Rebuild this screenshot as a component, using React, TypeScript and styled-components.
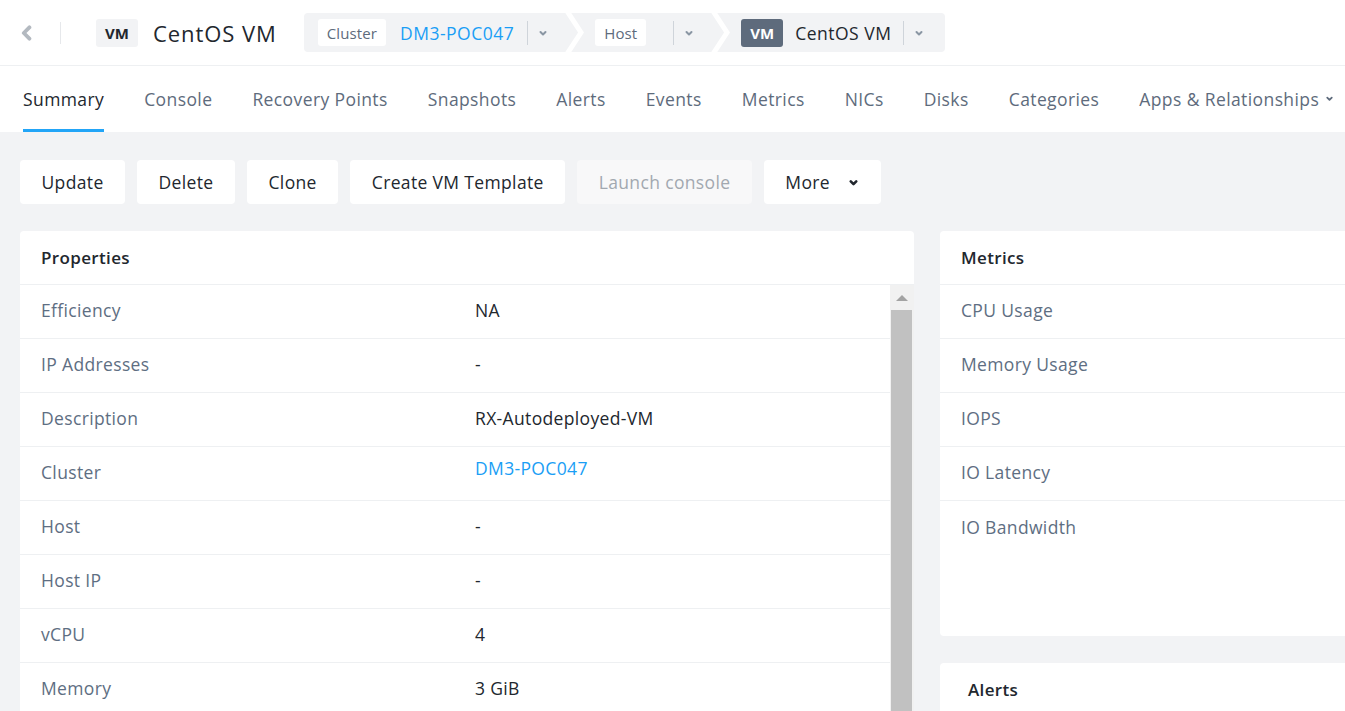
import React from "react";
import styled, { createGlobalStyle } from "styled-components";

const GlobalStyle = createGlobalStyle`
  html, body {
    margin: 0;
    padding: 0;
    background: #f2f3f5;
    font-family: "Open Sans", "Liberation Sans", sans-serif;
    letter-spacing: 0.35px;
    overflow: hidden;
  }
  * { box-sizing: border-box; }
`;

const Page = styled.div`
  width: 1345px;
  height: 711px;
  overflow: hidden;
  background: #f2f3f5;
`;

const TopBar = styled.header`
  height: 66px;
  background: #fff;
  border-bottom: 1px solid #eef0f2;
  display: flex;
  align-items: center;
  padding-left: 18px;
`;

const BackButton = styled.div`
  width: 18px;
  display: flex;
  align-items: center;
  justify-content: center;
  color: #b3b9c0;
`;

const VDivider = styled.div<{ $h?: number; $color?: string }>`
  width: 1px;
  height: ${(p) => p.$h ?? 22}px;
  background: ${(p) => p.$color ?? "#e6e8eb"};
`;

const TypeBadge = styled.div<{ $dark?: boolean }>`
  height: 28px;
  padding: 0 9px;
  border-radius: 3px;
  display: flex;
  align-items: center;
  font-size: 15px;
  font-weight: 700;
  letter-spacing: 0;
  background: ${(p) => (p.$dark ? "#5e6b7c" : "#f2f3f5")};
  color: ${(p) => (p.$dark ? "#fff" : "#22272e")};
`;

const PageTitle = styled.h1`
  margin: 0 27px 0 15px;
  font-size: 22px;
  font-weight: 400;
  letter-spacing: 0.95px;
  color: #22272e;
  white-space: nowrap;
`;

const Crumbs = styled.nav`
  height: 39px;
  background: #f2f3f5;
  border-radius: 4px;
  display: flex;
  align-items: center;
  padding: 0 11px 0 14px;
`;

const Segment = styled.div`
  display: flex;
  align-items: center;
  height: 100%;
`;

const CrumbPill = styled.span`
  height: 27px;
  padding: 0 9px;
  background: #fff;
  border-radius: 3px;
  display: flex;
  align-items: center;
  font-size: 15px;
  letter-spacing: 0.1px;
  color: #5e6b7c;
`;

const CrumbValue = styled.span<{ $link?: boolean; $gap?: number }>`
  margin-left: ${(p) => (p.$link ? 14 : 12)}px;
  margin-right: ${(p) => p.$gap ?? 12}px;
  font-size: 17.5px;
  letter-spacing: 0.5px;
  color: ${(p) => (p.$link ? "#1a9ef5" : "#22272e")};
  white-space: nowrap;
`;

const DropToggle = styled.span`
  width: 30px;
  display: flex;
  align-items: center;
  justify-content: center;
  color: #8a96a3;
`;

const CrumbArrow = styled.svg`
  width: 22px;
  height: 39px;
  margin: 0 9px 0 6px;
  flex-shrink: 0;
`;

const Tabs = styled.nav`
  height: 66px;
  background: #fff;
  display: flex;
  align-items: stretch;
  padding-left: 23px;
  gap: 40px;
`;

const Tab = styled.div<{ $active?: boolean }>`
  display: flex;
  align-items: center;
  gap: 6px;
  font-size: 17.5px;
  letter-spacing: 0.4px;
  white-space: nowrap;
  color: ${(p) => (p.$active ? "#22272e" : "#5e6b7c")};
  border-bottom: 3px solid ${(p) => (p.$active ? "#22a5f7" : "transparent")};
  padding-top: 2px;
`;

const Content = styled.main`
  padding: 28px 0 0 20px;
`;

const Toolbar = styled.div`
  display: flex;
  gap: 12px;
  margin-bottom: 27px;
`;

const ActionButton = styled.button<{ $disabled?: boolean }>`
  height: 44px;
  padding: 0 21.5px;
  border: none;
  border-radius: 4px;
  font-family: inherit;
  font-size: 17.5px;
  letter-spacing: 0.35px;
  display: flex;
  align-items: center;
  gap: 18px;
  background: ${(p) => (p.$disabled ? "#f8f8f9" : "#fff")};
  color: ${(p) => (p.$disabled ? "#a2a8b0" : "#22272e")};
`;

const Columns = styled.div`
  display: grid;
  grid-template-columns: 894px 440px;
  gap: 26px;
  align-items: start;
`;

const Stack = styled.div`
  display: flex;
  flex-direction: column;
  gap: 27px;
`;

const Card = styled.section<{ $h?: number }>`
  background: #fff;
  border-radius: 4px;
  overflow: hidden;
  height: ${(p) => (p.$h ? `${p.$h}px` : "auto")};
`;

const CardTitle = styled.h2<{ $indent?: number }>`
  margin: 0;
  height: 54px;
  display: flex;
  align-items: center;
  padding-left: ${(p) => p.$indent ?? 21}px;
  font-size: 17px;
  font-weight: 600;
  color: #22272e;
  border-bottom: 1px solid #eef0f2;
`;

const CardBody = styled.div`
  display: flex;
`;

const RowList = styled.div`
  flex: 1;
`;

const Row = styled.div<{ $last?: boolean }>`
  height: 54px;
  display: grid;
  grid-template-columns: 434px 1fr;
  align-items: center;
  padding: 0 0 3px 21px;
  border-bottom: ${(p) => (p.$last ? "none" : "1px solid #eef0f2")};
`;

const Label = styled.span`
  font-size: 17.5px;
  color: #5e6e82;
`;

const Value = styled.span<{ $link?: boolean }>`
  font-size: 17.5px;
  color: ${(p) => (p.$link ? "#1a9ef5" : "#22272e")};
  font-weight: ${(p) => (p.$link ? 500 : 400)};
  position: relative;
  top: ${(p) => (p.$link ? -4 : 0)}px;
`;

const ScrollTrack = styled.div`
  width: 24px;
  background: #f1f1f1;
  display: flex;
  flex-direction: column;
  align-items: center;
  padding: 0 2px 0 1px;
`;

const ScrollArrow = styled.div`
  height: 25px;
  display: flex;
  align-items: center;
  justify-content: center;
  &::after {
    content: "";
    border-left: 6px solid transparent;
    border-right: 6px solid transparent;
    border-bottom: 6px solid #a3a3a3;
  }
`;

const ScrollThumb = styled.div`
  width: 100%;
  height: 600px;
  background: #c1c1c1;
`;

const Chevron = ({ size = 10, dir = "down", w = 2 }: { size?: number; dir?: "down" | "left"; w?: number }) => (
  <svg width={size} height={size} viewBox="0 0 10 10" fill="none">
    <path
      d={dir === "down" ? "M2.5 4 L5 6.5 L7.5 4" : "M6.5 1.5 L3 5 L6.5 8.5"}
      stroke="currentColor"
      strokeWidth={w}
      strokeLinecap="round"
      strokeLinejoin="round"
    />
  </svg>
);

const Arrow = () => (
  <CrumbArrow viewBox="0 0 22 39">
    <polyline points="3,-2 17,19.5 3,41" fill="none" stroke="#fff" strokeWidth="5" />
  </CrumbArrow>
);

const properties: { label: string; value: string; link?: boolean }[] = [
  { label: "Efficiency", value: "NA" },
  { label: "IP Addresses", value: "-" },
  { label: "Description", value: "RX-Autodeployed-VM" },
  { label: "Cluster", value: "DM3-POC047", link: true },
  { label: "Host", value: "-" },
  { label: "Host IP", value: "-" },
  { label: "vCPU", value: "4" },
  { label: "Memory", value: "3 GiB" },
];

const metrics = ["CPU Usage", "Memory Usage", "IOPS", "IO Latency", "IO Bandwidth"];

const tabs = [
  "Summary",
  "Console",
  "Recovery Points",
  "Snapshots",
  "Alerts",
  "Events",
  "Metrics",
  "NICs",
  "Disks",
  "Categories",
];

const App: React.FC = () => {
  return (
    <Page>
      <GlobalStyle />
      <TopBar>
        <BackButton>
          <Chevron size={16} dir="left" w={2.4} />
        </BackButton>
        <div style={{ width: 24 }} />
        <VDivider $h={22} />
        <div style={{ width: 35 }} />
        <TypeBadge>VM</TypeBadge>
        <PageTitle>CentOS VM</PageTitle>

        <Crumbs>
          <Segment>
            <CrumbPill>Cluster</CrumbPill>
            <CrumbValue $link $gap={13}>DM3-POC047</CrumbValue>
            <VDivider $h={24} $color="#cfd4da" />
            <DropToggle>
              <Chevron />
            </DropToggle>
          </Segment>
          <Arrow />
          <Segment>
            <CrumbPill>Host</CrumbPill>
            <CrumbValue $gap={15} />
            <VDivider $h={24} $color="#cfd4da" />
            <DropToggle>
              <Chevron />
            </DropToggle>
          </Segment>
          <Arrow />
          <Segment>
            <TypeBadge $dark>VM</TypeBadge>
            <CrumbValue>CentOS VM</CrumbValue>
            <VDivider $h={24} $color="#cfd4da" />
            <DropToggle>
              <Chevron />
            </DropToggle>
          </Segment>
        </Crumbs>
      </TopBar>

      <Tabs>
        {tabs.map((t, i) => (
          <Tab key={t} $active={i === 0}>
            {t}
          </Tab>
        ))}
        <Tab>
          Apps &amp; Relationships
          <Chevron size={9} />
        </Tab>
      </Tabs>

      <Content>
        <Toolbar>
          <ActionButton>Update</ActionButton>
          <ActionButton>Delete</ActionButton>
          <ActionButton>Clone</ActionButton>
          <ActionButton>Create VM Template</ActionButton>
          <ActionButton $disabled>Launch console</ActionButton>
          <ActionButton>
            More
            <Chevron size={11} w={2.4} />
          </ActionButton>
        </Toolbar>

        <Columns>
          <Card>
            <CardTitle>Properties</CardTitle>
            <CardBody>
              <RowList>
                {properties.map((p) => (
                  <Row key={p.label}>
                    <Label>{p.label}</Label>
                    <Value $link={p.link}>{p.value}</Value>
                  </Row>
                ))}
              </RowList>
              <ScrollTrack>
                <ScrollArrow />
                <ScrollThumb />
              </ScrollTrack>
            </CardBody>
          </Card>

          <Stack>
            <Card $h={405}>
              <CardTitle>Metrics</CardTitle>
              {metrics.map((m, i) => (
                <Row key={m} $last={i === metrics.length - 1}>
                  <Label>{m}</Label>
                </Row>
              ))}
            </Card>
            <Card>
              <CardTitle $indent={28}>Alerts</CardTitle>
            </Card>
          </Stack>
        </Columns>
      </Content>
    </Page>
  );
};

export default App;
